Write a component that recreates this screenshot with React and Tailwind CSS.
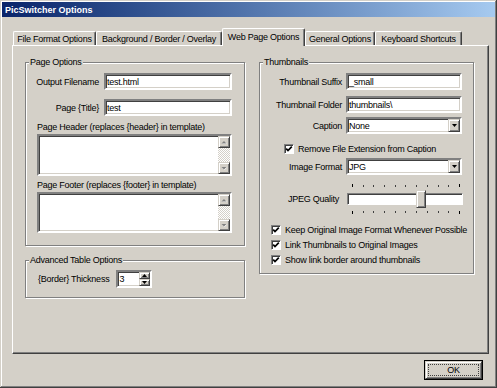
import React from "react";

const SUNKEN =
  "border-2 border-t-[#808080] border-l-[#808080] border-b-white border-r-white shadow-[inset_1px_1px_#404040,inset_-1px_-1px_#d4d0c8]";
const RAISED =
  "bg-[#d4d0c8] border border-t-[#d4d0c8] border-l-[#d4d0c8] border-b-[#404040] border-r-[#404040] shadow-[inset_1px_1px_#fff,inset_-1px_-1px_#808080]";
const GROUP =
  "m-0 p-0 min-w-0 border border-[#808080] shadow-[1px_1px_0_#fff,inset_1px_1px_0_#fff]";
const LEGEND = "ml-[3px] px-[1px] bg-[#d4d0c8] leading-[10px] whitespace-nowrap";

function DownArrow() {
  return (
    <svg width="5" height="3" viewBox="0 0 5 3">
      <polygon points="0,0 5,0 2.5,3" fill="#000" />
    </svg>
  );
}
function UpArrow() {
  return (
    <svg width="5" height="3" viewBox="0 0 5 3">
      <polygon points="0,3 5,3 2.5,0" fill="#000" />
    </svg>
  );
}
function GrayArrow({ up }) {
  return (
    <svg width="7" height="5" viewBox="0 0 7 5">
      {up ? (
        <>
          <polygon points="1,4 6,4 3.5,1.5" fill="#fff" />
          <polygon points="0.5,3.5 5.5,3.5 3,1" fill="#808080" />
        </>
      ) : (
        <>
          <polygon points="1,1.5 6,1.5 3.5,4" fill="#fff" />
          <polygon points="0.5,1 5.5,1 3,3.5" fill="#808080" />
        </>
      )}
    </svg>
  );
}

function Field({ w, value }) {
  return (
    <div className={`flex items-center bg-white h-[17px] ${w} pl-[1px] ${SUNKEN}`}>
      <span className="whitespace-nowrap">{value}</span>
    </div>
  );
}

function Select({ w, value }) {
  return (
    <div className={`flex items-center bg-white h-[17px] ${w} pl-[1px] ${SUNKEN}`}>
      <span className="whitespace-nowrap">{value}</span>
      <div className={`ml-auto h-full w-[12px] flex items-center justify-center ${RAISED}`}>
        <DownArrow />
      </div>
    </div>
  );
}

function Memo({ h }) {
  return (
    <div className={`flex justify-end bg-white w-[195px] ${h} ${SUNKEN}`}>
      <div className="flex flex-col w-[12px] h-full">
        <div className={`h-[12px] flex items-center justify-center ${RAISED}`}>
          <GrayArrow up />
        </div>
        <div className="flex-1 bg-[image:repeating-conic-gradient(#fff_0%_25%,#d4d0c8_0%_50%)] bg-[length:2px_2px]" />
        <div className={`h-[12px] flex items-center justify-center ${RAISED}`}>
          <GrayArrow />
        </div>
      </div>
    </div>
  );
}

function Check({ label, ml }) {
  return (
    <div className={`flex items-center h-[13px] ${ml}`}>
      <div className="w-[10px] h-[10px] bg-white border border-t-[#808080] border-l-[#808080] border-b-white border-r-white shadow-[inset_1px_1px_#404040] flex items-center justify-center">
        <svg width="8" height="8" viewBox="0 0 8 8">
          <polyline points="1.2,3.6 3,5.6 6.8,1.6" fill="none" stroke="#000" strokeWidth="1.7" />
        </svg>
      </div>
      <span className="ml-[4px] whitespace-nowrap">{label}</span>
    </div>
  );
}

function Label({ w, children, pr }) {
  return <div className={`flex justify-end whitespace-nowrap ${w} ${pr || ""}`}>{children}</div>;
}

const TICKS = [0, 1, 2, 3, 4, 5, 6, 7, 8, 9, 10];

function TickRow({ align }) {
  return (
    <div className={`flex justify-between h-[3px] pl-[6px] pr-[3px] ${align}`}>
      {TICKS.map((t) => (
        <div
          key={t}
          className={t === 0 || t === 10 ? "w-[1px] h-[3px] bg-black" : "w-[1px] h-[2px] bg-[#404040]"}
        />
      ))}
    </div>
  );
}

function Tab({ w, children, active }) {
  if (active) {
    return (
      <div
        className={`${w} h-[18px] -mb-[1px] relative z-10 bg-[#d4d0c8] flex items-center justify-center pb-[2px] whitespace-nowrap border-t border-l border-white border-r border-r-[#404040] shadow-[inset_-1px_0_#808080] rounded-t-[2px]`}
      >
        {children}
      </div>
    );
  }
  return (
    <div
      className={`${w} h-[14px] flex items-center justify-center whitespace-nowrap border-t border-l border-white border-r border-r-[#404040] shadow-[inset_-1px_0_#808080] rounded-t-[2px]`}
    >
      {children}
    </div>
  );
}

export default function App() {
  return (
    <div className="w-[497px] h-[388px] bg-[#d4d0c8] flex flex-col overflow-hidden font-['Liberation_Sans',Arial,sans-serif] text-[9px] leading-[10px] tracking-[-0.25px] text-black shadow-[inset_-1px_-1px_#404040,inset_1px_1px_#d4d0c8,inset_-2px_-2px_#808080,inset_2px_2px_#fff]">
      {/* Title bar */}
      <div className="mx-[2px] mt-[2px] h-[15px] bg-linear-to-r from-[#0a246a] to-[#a6caf0] flex items-center pl-[3px]">
        <span className="text-white font-bold tracking-normal text-[9px] whitespace-nowrap">
          PicSwitcher Options
        </span>
      </div>

      {/* Tabs */}
      <div className="flex items-end ml-[13px] mt-[11px] h-[17px]">
        <Tab w="w-[83px]">File Format Options</Tab>
        <Tab w="w-[126px]">Background / Border / Overlay</Tab>
        <Tab w="w-[83px]" active>
          Web Page Options
        </Tab>
        <Tab w="w-[70px]">General Options</Tab>
        <Tab w="w-[87px]">Keyboard Shortcuts</Tab>
      </div>

      {/* Panel */}
      <div className="ml-[12px] w-[477px] h-[309px] flex items-start gap-[14px] pl-[12px] pt-[11px] border-t border-l border-white border-r border-b border-r-[#404040] border-b-[#404040] shadow-[inset_-1px_-1px_#808080]">
        {/* Left column */}
        <div className="flex flex-col w-[220px]">
          <fieldset className={GROUP}>
            <legend className={LEGEND}>Page Options</legend>
            <div className="pt-[6px] pb-[12px] pl-[11px]">
              <div className="flex items-center h-[17px]">
                <Label w="w-[62px]">Output Filename</Label>
                <div className="ml-[5px]">
                  <Field w="w-[128px]" value="test.html" />
                </div>
              </div>
              <div className="flex items-center h-[17px] mt-[9px]">
                <Label w="w-[62px]">{"Page {Title}"}</Label>
                <div className="ml-[5px]">
                  <Field w="w-[128px]" value="test" />
                </div>
              </div>
              <div className="mt-[6px] whitespace-nowrap">{"Page Header (replaces {header} in template)"}</div>
              <div className="mt-[2px]">
                <Memo h="h-[42px]" />
              </div>
              <div className="mt-[4px] whitespace-nowrap">{"Page Footer (replaces {footer} in template)"}</div>
              <div className="mt-[2px]">
                <Memo h="h-[41px]" />
              </div>
            </div>
          </fieldset>

          <fieldset className={`${GROUP} mt-[9px]`}>
            <legend className={LEGEND}>Advanced Table Options</legend>
            <div className="pt-[5px] pb-[9px] pl-[12px]">
              <div className="flex items-center h-[18px]">
                <span className="whitespace-nowrap">{"{Border} Thickness"}</span>
                <div className={`ml-[7px] flex items-center bg-white w-[36px] h-[18px] pl-[1px] ${SUNKEN}`}>
                  <span>3</span>
                  <div className="ml-auto flex flex-col w-[11px] h-full">
                    <div className={`flex-1 flex items-center justify-center ${RAISED}`}>
                      <UpArrow />
                    </div>
                    <div className={`flex-1 flex items-center justify-center ${RAISED}`}>
                      <DownArrow />
                    </div>
                  </div>
                </div>
              </div>
            </div>
          </fieldset>
        </div>

        {/* Right column */}
        <fieldset className={`${GROUP} w-[215px]`}>
          <legend className={LEGEND}>Thumbnails</legend>
          <div className="pt-[6px] pb-[7px] pl-[10px]">
            <div className="flex items-center h-[17px]">
              <Label w="w-[72px]">Thumbnail Suffix</Label>
              <div className="ml-[4px]">
                <Field w="w-[116px]" value="_small" />
              </div>
            </div>
            <div className="flex items-center h-[17px] mt-[6px]">
              <Label w="w-[72px]">Thumbnail Folder</Label>
              <div className="ml-[4px]">
                <Field w="w-[116px]" value="thumbnails\" />
              </div>
            </div>
            <div className="flex items-center h-[17px] mt-[4px]">
              <Label w="w-[72px]">Caption</Label>
              <div className="ml-[4px]">
                <Select w="w-[116px]" value="None" />
              </div>
            </div>
            <div className="mt-[8px]">
              <Check ml="ml-[14px]" label="Remove File Extension from Caption" />
            </div>
            <div className="flex items-center h-[17px] mt-[3px]">
              <Label w="w-[72px]">Image Format</Label>
              <div className="ml-[4px]">
                <Select w="w-[116px]" value="JPG" />
              </div>
            </div>
            <div className="flex items-center mt-[9px]">
              <Label w="w-[72px]" pr="pr-[3px]">
                JPEG Quality
              </Label>
              <div className="ml-[4px] relative w-[117px] h-[30px] flex flex-col">
                <TickRow align="items-end" />
                <div className="mt-[6px] ml-[1px] w-[116px] h-[12px] bg-white border border-t-[#808080] border-l-[#808080] border-b-white border-r-white shadow-[inset_1px_1px_#404040]" />
                <div className="mt-[6px]">
                  <TickRow align="items-start" />
                </div>
                <div className={`absolute left-[70px] top-[6px] w-[10px] h-[18px] ${RAISED}`} />
              </div>
            </div>
            <div className="mt-[9px]">
              <Check ml="ml-[1px]" label="Keep Original Image Format Whenever Possible" />
            </div>
            <div className="mt-[2px]">
              <Check ml="ml-[1px]" label="Link Thumbnails to Original Images" />
            </div>
            <div className="mt-[2px]">
              <Check ml="ml-[1px]" label="Show link border around thumbnails" />
            </div>
          </div>
        </fieldset>
      </div>

      {/* Button row */}
      <div className="flex justify-end mr-[14px] mt-[6px]">
        <div className="w-[59px] h-[20px] border border-black">
          <div className={`w-full h-full flex items-center justify-center p-[2px] ${RAISED}`}>
            <div className="w-full h-full flex items-center justify-center border border-dotted border-[#404040]">
              OK
            </div>
          </div>
        </div>
      </div>
    </div>
  );
}
